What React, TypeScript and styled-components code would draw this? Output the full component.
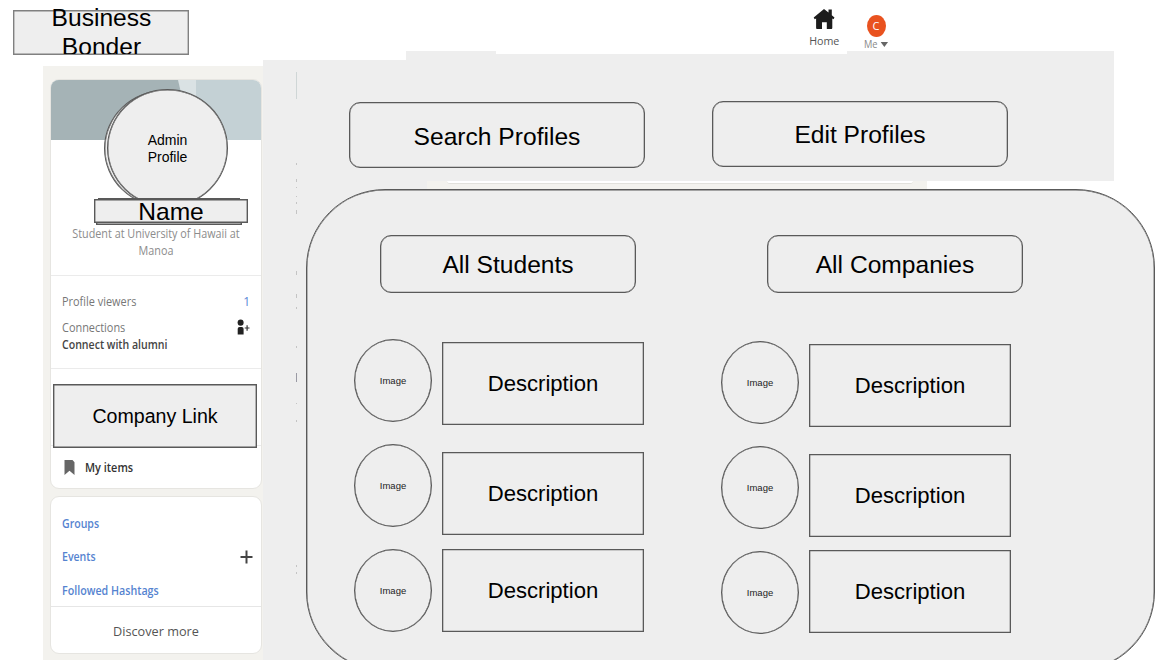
import React from "react";
import styled, { createGlobalStyle } from "styled-components";

const INK = "#595959";
const FILL = "#eeeeee";
const SAND = "#f3f2ee";

const Global = createGlobalStyle`
  * { box-sizing: border-box; }
  body { margin: 0; background: #fff; }
`;

const Page = styled.div`
  width: 1160px;
  height: 660px;
  overflow: hidden;
  display: flex;
  flex-direction: column;
  background: #fff;
  color: #000;
  font-family: "Liberation Sans", Arial, sans-serif;
`;

const Header = styled.header`
  height: 51px;
  flex: none;
  display: flex;
  align-items: flex-start;
`;

const Logo = styled.div`
  width: 176px;
  height: 45px;
  margin: 10px 0 0 13px;
  border: 1px solid #808080;
  box-shadow: inset 0 0 0 0.4px #808080;
  background: ${FILL};
  font-size: 24.6px;
  line-height: 28.5px;
  text-align: center;
  padding-left: 1px;
  clip-path: inset(-4px 0 0 0);
  span {
    display: block;
    height: 50px;
    margin-top: -7px;
    overflow: hidden;
  }
`;

const Nav = styled.nav`
  display: flex;
  margin-left: 616px;
  font-family: "Open Sans", sans-serif;
`;

const NavItem = styled.div<{ $w: number; $top: number; $size: number; $color: string }>`
  width: ${(p) => p.$w}px;
  padding-top: ${(p) => p.$top}px;
  display: flex;
  flex-direction: column;
  align-items: center;
  font-size: ${(p) => p.$size}px;
  line-height: 14px;
  color: ${(p) => p.$color};
  svg { display: block; }
`;

const NavLabel = styled.span<{ $gap: number }>`
  display: flex;
  align-items: center;
  gap: 3px;
  margin-top: ${(p) => p.$gap}px;
  transform: scaleX(0.93);
`;

const UserDot = styled.div`
  width: 19px;
  height: 22px;
  border-radius: 50%;
  background: #e9521f;
  color: #fff;
  font-size: 11px;
  line-height: 22px;
  text-align: center;
`;

const Body = styled.div`
  flex: 1;
  min-height: 0;
  display: flex;
  padding-left: 43px;
`;

const Sidebar = styled.aside`
  width: 220px;
  flex: none;
  margin-top: 15px;
  padding: 13px 1px 0 7px;
  background: ${SAND};
  font-family: "Open Sans", sans-serif;
  font-size: 12px;
  color: #777;
`;

const Card = styled.section<{ $h: number }>`
  height: ${(p) => p.$h}px;
  margin-bottom: 7px;
  border: 1px solid #e6e5e1;
  border-radius: 9px;
  background: #fff;
  overflow: hidden;
`;

const Narrow = styled.span<{ $scale?: number }>`
  display: inline-block;
  transform: scaleX(${(p) => p.$scale ?? 0.91});
  transform-origin: left center;
`;

const Identity = styled.div`
  position: relative;
  height: 196px;
  border-bottom: 1px solid #ebebeb;
`;

const Banner = styled.svg`
  display: block;
`;

const Portrait = styled.div<{ $x: number; $y: number; $w: number; $h: number }>`
  position: absolute;
  left: ${(p) => p.$x}px;
  top: ${(p) => p.$y}px;
  width: ${(p) => p.$w}px;
  height: ${(p) => p.$h}px;
  padding-top: 2px;
  border: 1px solid ${INK};
  box-shadow: inset 0 0 0 0.4px ${INK};
  border-radius: 50%;
  background: ${FILL};
  color: #000;
  font: 14px/17px "Liberation Sans", Arial, sans-serif;
  display: flex;
  align-items: center;
  justify-content: center;
  text-align: center;
`;

const Plate = styled.div<{ $x: number; $y: number; $w: number; $h: number }>`
  position: absolute;
  left: ${(p) => p.$x}px;
  top: ${(p) => p.$y}px;
  width: ${(p) => p.$w}px;
  height: ${(p) => p.$h}px;
  border: 1px solid ${INK};
  box-shadow: inset 0 0 0 0.4px ${INK};
  background: ${FILL};
  color: #000;
  font: 24.6px/24px "Liberation Sans", Arial, sans-serif;
  text-align: center;
`;

const Headline = styled.p`
  margin: 85px -10px 0;
  line-height: 17px;
  text-align: center;
  color: #8c8c8c;
  transform: scaleX(0.9);
`;

const Stats = styled.div`
  height: 93px;
  padding: 17px 11px 0;
  border-bottom: 1px solid #ebebeb;
`;

const Line = styled.div<{ $h: number; $color?: string; $bold?: boolean }>`
  height: ${(p) => p.$h}px;
  display: flex;
  align-items: center;
  justify-content: space-between;
  white-space: nowrap;
  color: ${(p) => p.$color ?? "#777"};
  font-weight: ${(p) => (p.$bold ? 600 : 400)};
  b { font-weight: 500; color: #5b88d6; }
`;

const LinkSlot = styled.div`
  height: 77px;
  padding: 15px 4px 0 2px;
  border-bottom: 1px solid #ebebeb;
`;

const CompanyLink = styled.div`
  position: relative;
  height: 64px;
  border: 1px solid ${INK};
  box-shadow: inset 0 0 0 0.4px ${INK};
  background: ${FILL};
  color: #000;
  font: 19.6px/62px "Liberation Sans", Arial, sans-serif;
  text-align: center;
`;

const MyItems = styled.div`
  display: flex;
  align-items: center;
  gap: 10px;
  height: 43px;
  padding-left: 13px;
  color: #333;
  font-weight: 600;
`;

const Links = styled.div`
  height: 110px;
  padding: 9px 8px 0 11px;
  border-bottom: 1px solid #e6e6e6;
`;

const Discover = styled.div`
  height: 48px;
  line-height: 49px;
  text-align: center;
  font-size: 13.5px;
  color: #555;
  transform: scaleX(0.94);
`;

const Main = styled.main`
  position: relative;
  flex: 1;
  display: flex;
  flex-direction: column;
`;

const Toolbar = styled.div`
  width: 851px;
  height: 130px;
  flex: none;
  display: flex;
  align-items: flex-start;
  gap: 67px;
  padding: 50px 0 0 86px;
  background: ${FILL};
  clip-path: polygon(0 9px, 143px 9px, 143px 0, 233px 0, 233px 3px, 584px 3px, 584px 0, 100% 0, 100% 100%, 0 100%);
`;

const Pill = styled.div<{ $w: number; $h: number; $drop?: number }>`
  width: ${(p) => p.$w}px;
  height: ${(p) => p.$h}px;
  margin-top: ${(p) => p.$drop ?? 0}px;
  border: 1px solid ${INK};
  box-shadow: inset 0 0 0 0.3px ${INK};
  border-radius: 11px;
  background: ${FILL};
  display: flex;
  align-items: center;
  justify-content: center;
  font-size: 24.6px;
  padding-top: ${(p) => (p.$drop ? 3 : 1)}px;
`;

const Backdrop = styled.div`
  flex: 1;
  min-height: 0;
  padding-left: 43px;
  background: linear-gradient(90deg, ${FILL} 164px, ${SAND} 164px 664px, #fff 664px);
`;

const SheetEdge = styled.div`
  width: 466px;
  height: 3px;
  margin-left: 141px;
  border-bottom: 1px solid #e2e1dc;
  border-radius: 0 0 5px 5px;
  background: #fff;
`;

const Panel = styled.div`
  width: 849px;
  height: 482px;
  margin-top: 5px;
  border: 1px solid ${INK};
  box-shadow: inset 0 0 0 0.4px ${INK};
  border-radius: 79px;
  background: ${FILL};
  display: flex;
  padding: 45px 0 0 47px;
`;

const Group = styled.div<{ $w: number }>`
  width: ${(p) => p.$w}px;
`;

const Listing = styled.div<{ $top: number }>`
  display: flex;
  gap: 10px;
  margin-top: ${(p) => p.$top}px;
`;

const Stack = styled.div`
  display: flex;
  flex-direction: column;
`;

const Picture = styled.div`
  width: 78px;
  height: 83px;
  margin-bottom: 22px;
  border: 1px solid ${INK};
  box-shadow: inset 0 0 0 0.3px ${INK};
  border-radius: 50%;
  display: flex;
  align-items: center;
  justify-content: center;
  font-size: 9.5px;
  color: #222;
`;

const Description = styled.div<{ $top: number }>`
  width: 202px;
  height: 83px;
  margin-top: ${(p) => p.$top}px;
  border: 1px solid ${INK};
  box-shadow: inset 0 0 0 0.3px ${INK};
  display: flex;
  align-items: center;
  justify-content: center;
  font-size: 22.1px;
  padding-top: 1px;
`;

const Specks = styled.svg`
  position: absolute;
  left: 33px;
  top: 0;
`;

const PillSlot = styled.div<{ $x: number }>`
  padding-left: ${(p) => p.$x}px;
`;

const HomeIcon = () => (
  <svg width="22" height="22" viewBox="0 0 22 22" fill="#1c1c1c">
    <path d="M11 1 15.500 4.500V1.500h3.300v5.700l2.700 2.300-1 1.700-1.200-.6v9.200c0 .8-.4 1.300-1.200 1.300h-4.300v-6.800H9v6.800H4.300c-.8 0-1.200-.5-1.200-1.300v-9.200l-1.400.6-1-1.700z" />
  </svg>
);

const AddPerson = () => (
  <svg width="14" height="16" viewBox="0 0 14 16" fill="#222">
    <ellipse cx="4.600" cy="3.600" rx="3" ry="3.200" />
    <path d="M1.700 15.500V10.400c0-1.500.7-2.300 2-2.300h1.900c1.300 0 2 .8 2 2.300v5.100z" />
    <path d="M8.700 9h4.800M11.100 6.300v5.400" stroke="#333" strokeWidth="1.200" />
  </svg>
);

const Bookmark = () => (
  <svg width="11" height="15" viewBox="0 0 11 15" fill="#666">
    <path d="M.5 0H8.500l2 2.200V15L5.500 10.800.5 15z" />
  </svg>
);

const Plus = () => (
  <svg width="13" height="14" viewBox="0 0 13 14" stroke="#444" strokeWidth="2">
    <path d="M.5 7h12M6.500.5v13" />
  </svg>
);

const specks: [number, number][] = [
  [112, 2], [128, 3], [136, 1], [145, 1], [151, 2], [159, 4],
  [220, 4], [243, 4], [256, 2], [295, 2], [352, 1], [369, 2], [514, 2], [521, 2],
];

const groups = [
  { title: "All Students", width: 367, pillX: 26, top: 46, offsets: [3, 27, 14] },
  { title: "All Companies", width: 400, pillX: 46, top: 48, offsets: [3, 27, 13] },
];

export default function App() {
  return (
    <Page>
      <Global />
      <Header>
        <Logo>
          <span>
            Business
            <br />
            Bonder
          </span>
        </Logo>
        <Nav>
          <NavItem $w={38} $top={8} $size={11.5} $color="#555">
            <HomeIcon />
            <NavLabel $gap={4}>Home</NavLabel>
          </NavItem>
          <NavItem $w={66} $top={15} $size={10} $color="#888">
            <UserDot>C</UserDot>
            <NavLabel $gap={0}>
              Me
              <svg width="8" height="5" viewBox="0 0 8 5" fill="#666">
                <path d="M0 0h8L4 5z" />
              </svg>
            </NavLabel>
          </NavItem>
        </Nav>
      </Header>
      <Body>
        <Sidebar>
          <Card $h={410}>
            <Identity>
              <Banner width="211" height="60" viewBox="0 0 211 60">
                <path d="M0 0h211v60H0z" fill="#c4d1d5" />
                <path d="M0 0h145v60H0z" fill="#dae2e4" />
                <path d="M0 0h127l14 60H0z" fill="#a5b3b6" />
              </Banner>
              <Portrait $x={53} $y={10} $w={121} $h={117} />
              <Portrait $x={56} $y={9} $w={121} $h={118}>
                Admin
                <br />
                Profile
              </Portrait>
              <Plate $x={47} $y={118} $w={142} $h={10} />
              <Plate $x={45} $y={134} $w={146} $h={11} />
              <Plate $x={43} $y={119} $w={154} $h={24}>Name</Plate>
              <Headline>
                Student at University of Hawaii at
                <br />
                Manoa
              </Headline>
            </Identity>
            <Stats>
              <Line $h={17}>
                <Narrow>Profile viewers</Narrow> <b>1</b>
              </Line>
              <Line $h={34}>
                <Narrow>Connections</Narrow> <AddPerson />
              </Line>
              <Line $h={0} $color="#444" $bold>
                <Narrow $scale={0.88}>Connect with alumni</Narrow>
              </Line>
            </Stats>
            <LinkSlot>
              <CompanyLink>Company Link</CompanyLink>
            </LinkSlot>
            <MyItems>
              <Bookmark />
              <Narrow>My items</Narrow>
            </MyItems>
          </Card>
          <Card $h={158}>
            <Links>
              <Line $h={34} $color="#5583d0" $bold>
                <Narrow $scale={0.88}>Groups</Narrow>
              </Line>
              <Line $h={33} $color="#5583d0" $bold>
                <Narrow $scale={0.88}>Events</Narrow> <Plus />
              </Line>
              <Line $h={34} $color="#5583d0" $bold>
                <Narrow $scale={0.89}>Followed Hashtags</Narrow>
              </Line>
            </Links>
            <Discover>Discover more</Discover>
          </Card>
        </Sidebar>
        <Main>
          <Toolbar>
            <Pill $w={296} $h={66} $drop={1}>Search Profiles</Pill>
            <Pill $w={296} $h={66}>Edit Profiles</Pill>
          </Toolbar>
          <Backdrop>
            <SheetEdge />
            <Panel>
              {groups.map((g) => (
                <Group key={g.title} $w={g.width}>
                  <PillSlot $x={g.pillX}>
                    <Pill $w={256} $h={58}>{g.title}</Pill>
                  </PillSlot>
                  <Listing $top={g.top}>
                    <Stack>
                      {g.offsets.map((_, i) => (
                        <Picture key={i}>Image</Picture>
                      ))}
                    </Stack>
                    <Stack>
                      {g.offsets.map((top, i) => (
                        <Description key={i} $top={top}>Description</Description>
                      ))}
                    </Stack>
                  </Listing>
                </Group>
              ))}
            </Panel>
          </Backdrop>
          <Specks width="2" height="609" viewBox="0 0 2 609">
            <path d="M.5 21v27" stroke="#cfd6d6" />
            <path d="M.5 322v9" stroke="#9a9aa4" />
            {specks.map(([y, h]) => (
              <path key={y} d={`M.5 ${y}v${h}`} stroke="#c4c4c4" />
            ))}
          </Specks>
        </Main>
      </Body>
    </Page>
  );
}
